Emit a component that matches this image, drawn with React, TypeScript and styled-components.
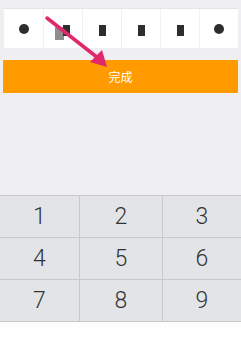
import { FC } from 'react'
import styled, { createGlobalStyle } from 'styled-components'

const GlobalStyle = createGlobalStyle`
  html, body {
    margin: 0;
    padding: 0;
    background: #efeff3;
    font-family: "Liberation Sans", "Noto Sans CJK SC", Arial, sans-serif;
  }
`

const Page = styled.div`
  position: relative;
  width: 241px;
  height: 341px;
  display: flex;
  flex-direction: column;
  background: #efeff3;
  overflow: hidden;
`

const CodeRow = styled.div`
  margin: 8px 3px 0 4px;
  height: 40px;
  display: grid;
  grid-template-columns: repeat(6, 1fr);
  background: #fff;
  border-top: 1px solid #e4e4e6;
  box-sizing: border-box;
`

const Cell = styled.div<{ $first?: boolean }>`
  display: flex;
  align-items: center;
  justify-content: center;
  border-left: ${p => (p.$first ? 'none' : '1px solid #f1f1f3')};
`

const Dot = styled.span`
  width: 10px;
  height: 10px;
  border-radius: 50%;
  background: #2e2e30;
  margin-top: 1px;
`

const Bar = styled.span<{ $smudge?: boolean }>`
  width: 7px;
  height: 11px;
  background: #2e2e30;
  margin-top: 3px;
  margin-left: ${p => (p.$smudge ? '6px' : '0')};
  box-shadow: ${p => (p.$smudge ? '-7px 3px 0 1px #8e8e90' : 'none')};
`

const DoneButton = styled.button`
  margin: 12px 3px 0 3px;
  height: 33px;
  border: none;
  border-radius: 1px;
  background: #ff9a00;
  color: #fff;
  font-family: "Noto Sans CJK SC", sans-serif;
  font-size: 12px;
  padding: 0;
`

const Spacer = styled.div`
  flex: 1;
`

const Keypad = styled.div`
  display: grid;
  grid-template-columns: 79px 83px 1fr;
  grid-auto-rows: 42px;
  background: #e3e4e7;
  border-top: 1px solid #c9c9cd;
`

const Key = styled.div<{ $col: number }>`
  display: flex;
  align-items: center;
  justify-content: center;
  font-family: Roboto, "Liberation Sans", Arial, sans-serif;
  font-weight: 300;
  font-size: 23px;
  color: #333;
  border-left: ${p => (p.$col === 0 ? 'none' : '1px solid #c9c9cd')};
  border-bottom: 1px solid #c9c9cd;
  box-sizing: border-box;
`

const Footer = styled.div`
  height: 19px;
  background: #fdfefd;
`

const Arrow = styled.svg`
  position: absolute;
  left: 0;
  top: 0;
  pointer-events: none;
`

const slots = ['dot', 'bar', 'bar', 'bar', 'bar', 'dot']
const keys = ['1', '2', '3', '4', '5', '6', '7', '8', '9']

const App: FC = () => {
  return (
    <Page>
      <GlobalStyle />
      <CodeRow>
        {slots.map((s, i) => (
          <Cell key={i} $first={i === 0}>
            {s === 'dot' ? <Dot /> : <Bar $smudge={i === 1} />}
          </Cell>
        ))}
      </CodeRow>
      <DoneButton>完成</DoneButton>
      <Spacer />
      <Keypad>
        {keys.map((k, i) => (
          <Key key={k} $col={i % 3}>
            {k}
          </Key>
        ))}
      </Keypad>
      <Footer />
      <Arrow width="241" height="100" viewBox="0 0 241 100">
        <line x1="47" y1="18" x2="98" y2="58" stroke="#e0286a" strokeWidth="3.5" strokeLinecap="round" />
        <polygon points="107,67 90,62 102,50" fill="#e0286a" />
      </Arrow>
    </Page>
  )
}

export default App
